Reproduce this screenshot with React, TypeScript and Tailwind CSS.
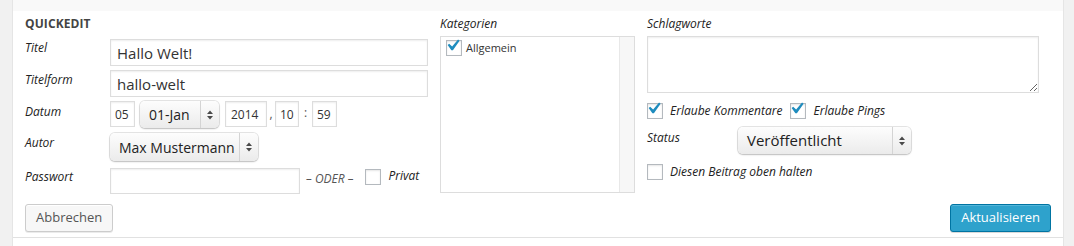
import React from "react";

function Check({ checked }: { checked?: boolean }) {
  return (
    <span className="relative block w-[16px] h-[16px] shrink-0 border border-[#b4b9be] bg-white shadow-[inset_0_1px_2px_rgba(0,0,0,0.1)]">
      {checked && (
        <svg viewBox="0 0 20 20" className="absolute w-[23px] h-[23px] left-[-6px] top-[-7px]">
          <path fill="#1e8cbe" d="M14.83 4.89l1.34.94-5.81 8.38H9.02L5.78 9.67l1.34-1.25 2.57 2.4z" />
        </svg>
      )}
    </span>
  );
}

function Arrows() {
  return (
    <svg viewBox="0 0 6 10" className="w-[6px] h-[10px]">
      <path d="M0 4 L3 0.5 L6 4 Z M0 6 L6 6 L3 9.5 Z" fill="#4a4a4a" />
    </svg>
  );
}

function NativeSelect({ label, className }: { label: string; className: string }) {
  return (
    <div
      className={
        "flex items-stretch rounded-[5px] bg-linear-to-b from-[#fdfdfd] to-[#ebebeb] shadow-[0_0_0_1px_rgba(0,0,0,0.1),0_1px_2px_rgba(0,0,0,0.18)] text-[#222] " +
        className
      }
    >
      <div className="flex-1 flex items-center pl-[9px] whitespace-nowrap">{label}</div>
      <div className="w-[19px] border-l border-[#d4d4d4] flex items-center justify-center">
        <Arrows />
      </div>
    </div>
  );
}

const input =
  "border border-[#ddd] bg-white shadow-[inset_0_1px_2px_rgba(0,0,0,0.07)] text-[#333] outline-none";

export default function App() {
  return (
    <div className="w-[1074px] h-[246px] bg-[#f1f1f1] flex overflow-hidden font-['Open_Sans',sans-serif]">
      <div className="w-[12px] shrink-0" />
      <div className="w-[1052px] shrink-0 border-x border-[#e5e5e5] flex flex-col">
        <div className="h-[11px] bg-[#f9f9f9]" />
        <div className="h-[227px] bg-white border-b border-[#e1e1e1] flex flex-col px-[12px] pt-[5px] pb-[5px]">
          <div className="flex">
            {/* Left fieldset */}
            <div className="w-[403px] shrink-0 flex flex-col">
              <div className="h-[16px] leading-[16px] text-[12px] font-bold text-[#444] tracking-[0.1px]">QUICKEDIT</div>

              <div className="flex mt-[7px]">
                <span className="w-[85px] pt-[1px] text-[12px] leading-[16px] italic text-[#222]">Titel</span>
                <input readOnly defaultValue="Hallo Welt!" className={input + " w-[318px] h-[27px] px-[6px] text-[15px]"} />
              </div>
              <div className="flex mt-[4px]">
                <span className="w-[85px] pt-[2px] text-[12px] leading-[16px] italic text-[#222]">Titelform</span>
                <input readOnly defaultValue="hallo-welt" className={input + " w-[318px] h-[27px] px-[6px] text-[15px]"} />
              </div>
              <div className="flex mt-[4px] items-start">
                <span className="w-[85px] pt-[3px] text-[12px] leading-[16px] italic text-[#222]">Datum</span>
                <input readOnly defaultValue="05" className={input + " w-[25px] h-[26px] px-[4px] text-[12px]"} />
                <NativeSelect label="01-Jan" className="ml-[5px] w-[79px] h-[27px] text-[14px]" />
                <input readOnly defaultValue="2014" className={input + " ml-[6px] w-[42px] h-[26px] px-[5px] text-[12px]"} />
                <span className="w-[8px] text-center text-[12px] leading-[26px] text-[#555]">,</span>
                <input readOnly defaultValue="10" className={input + " w-[24px] h-[26px] px-[4px] text-[12px]"} />
                <span className="w-[13px] text-center text-[12px] leading-[24px] text-[#555]">:</span>
                <input readOnly defaultValue="59" className={input + " w-[25px] h-[26px] px-[4px] text-[12px]"} />
              </div>
              <div className="flex mt-[5px] items-start">
                <span className="w-[85px] pt-[2px] text-[12px] leading-[16px] italic text-[#222]">Autor</span>
                <NativeSelect label="Max Mustermann" className="w-[148px] h-[28px] text-[14px]" />
              </div>
              <div className="flex mt-[7px] items-start">
                <span className="w-[85px] pt-[1px] text-[12px] leading-[16px] italic text-[#222]">Passwort</span>
                <input readOnly defaultValue="" className={input + " w-[190px] h-[26px] px-[6px] text-[14px]"} />
                <span className="ml-[6px] pt-[3px] text-[12px] leading-[16px] italic text-[#555]">– ODER –</span>
                <span className="ml-[12px] mt-[1px] flex">
                  <Check />
                </span>
                <span className="ml-[7px] text-[12px] leading-[16px] italic text-[#222]">Privat</span>
              </div>
            </div>

            {/* Kategorien */}
            <div className="ml-[12px] w-[195px] shrink-0 flex flex-col">
              <div className="h-[16px] leading-[16px] text-[12px] italic text-[#222]">Kategorien</div>
              <div className="mt-[4px] h-[157px] border border-[#ddd] bg-white flex">
                <div className="flex-1 pl-[5px] pt-[3px]">
                  <div className="flex items-center gap-[4px]">
                    <Check checked />
                    <span className="text-[11px] leading-[16px] text-[#333]">Allgemein</span>
                  </div>
                </div>
                <div className="w-[15px] bg-[#f7f7f7] border-l border-[#e8e8e8]" />
              </div>
            </div>

            {/* Right column */}
            <div className="ml-[12px] flex-1 flex flex-col">
              <div className="h-[16px] leading-[16px] text-[12px] italic text-[#222]">Schlagworte</div>
              <textarea
                readOnly
                defaultValue=""
                className={input + " block mt-[4px] w-[392px] h-[57px] resize"}
              />
              <div className="flex items-center mt-[10px] h-[16px]">
                <Check checked />
                <span className="ml-[7px] text-[12px] leading-[16px] italic text-[#222]">Erlaube Kommentare</span>
                <span className="ml-[8px] flex">
                  <Check checked />
                </span>
                <span className="ml-[7px] text-[12px] leading-[16px] italic text-[#222]">Erlaube Pings</span>
              </div>
              <div className="flex items-start mt-[8px]">
                <span className="w-[91px] pt-[3px] text-[12px] leading-[16px] italic text-[#222]">Status</span>
                <NativeSelect label="Veröffentlicht" className="w-[173px] h-[27px] text-[15px]" />
              </div>
              <div className="flex items-center mt-[10px] h-[16px]">
                <Check />
                <span className="ml-[7px] text-[12px] leading-[16px] italic text-[#222]">Diesen Beitrag oben halten</span>
              </div>
            </div>
          </div>

          <div className="mt-auto flex justify-between">
            <button className="h-[28px] px-[10px] rounded-[3px] border border-[#ccc] bg-[#f7f7f7] text-[13px] text-[#555] shadow-[inset_0_1px_0_#fff,0_1px_0_rgba(0,0,0,0.08)]">
              Abbrechen
            </button>
            <button className="h-[28px] px-[10px] rounded-[3px] border border-[#0074a2] bg-[#2ea2cc] text-[13px] text-white shadow-[inset_0_1px_0_rgba(120,200,230,0.5),0_1px_0_rgba(0,0,0,0.15)]">
              Aktualisieren
            </button>
          </div>
        </div>
        <div className="flex-1 bg-white" />
      </div>
    </div>
  );
}
